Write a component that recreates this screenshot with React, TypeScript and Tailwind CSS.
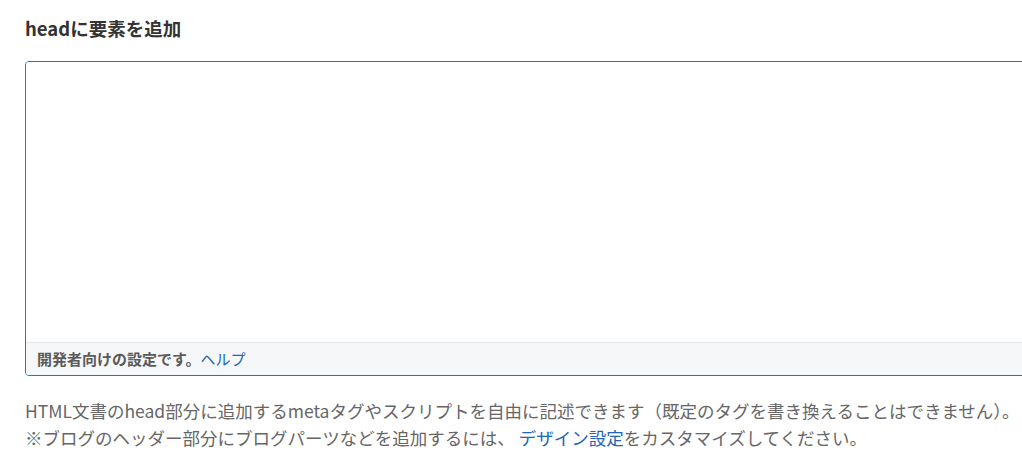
import React from 'react';

const App: React.FC = () => {
  return (
    <div
      className="w-[1022px] h-[463px] overflow-hidden bg-white pl-[25px]"
      style={{ fontFamily: '"Noto Sans CJK JP", "Noto Sans", sans-serif' }}
    >
      {/* Title */}
      <h2 className="pt-[15px] text-[18.5px] leading-[26px] font-bold text-[#333]">headに要素を追加</h2>

      {/* Textarea box */}
      <div className="mt-[20px] w-[1020px] h-[315px] flex flex-col rounded-[4px] overflow-hidden border border-sky-600">
        <textarea className="flex-1 resize-none outline-none bg-white border-0" />
        <div className="h-[33px] flex items-center px-[11px] bg-[#f6f7f9] border-t border-t-[#e3e5e8] text-[15px]">
          <span className="font-bold text-[#5a5a5a]">開発者向けの設定です。</span>
          <a href="#" className="text-[#2165b8]">ヘルプ</a>
        </div>
      </div>

      {/* Description */}
      <p className="mt-[21px] text-[17.5px] leading-[27px] text-[#666] whitespace-nowrap">
        HTML文書のhead部分に追加するmetaタグやスクリプトを自由に記述できます（既定のタグを書き換えることはできません）。
        <br />
        ※ブログのヘッダー部分にブログパーツなどを追加するには、<a href="#" className="ml-[4px] text-[#2165b8]">デザイン設定</a>をカスタマイズしてください。
      </p>
    </div>
  );
};

export default App;
